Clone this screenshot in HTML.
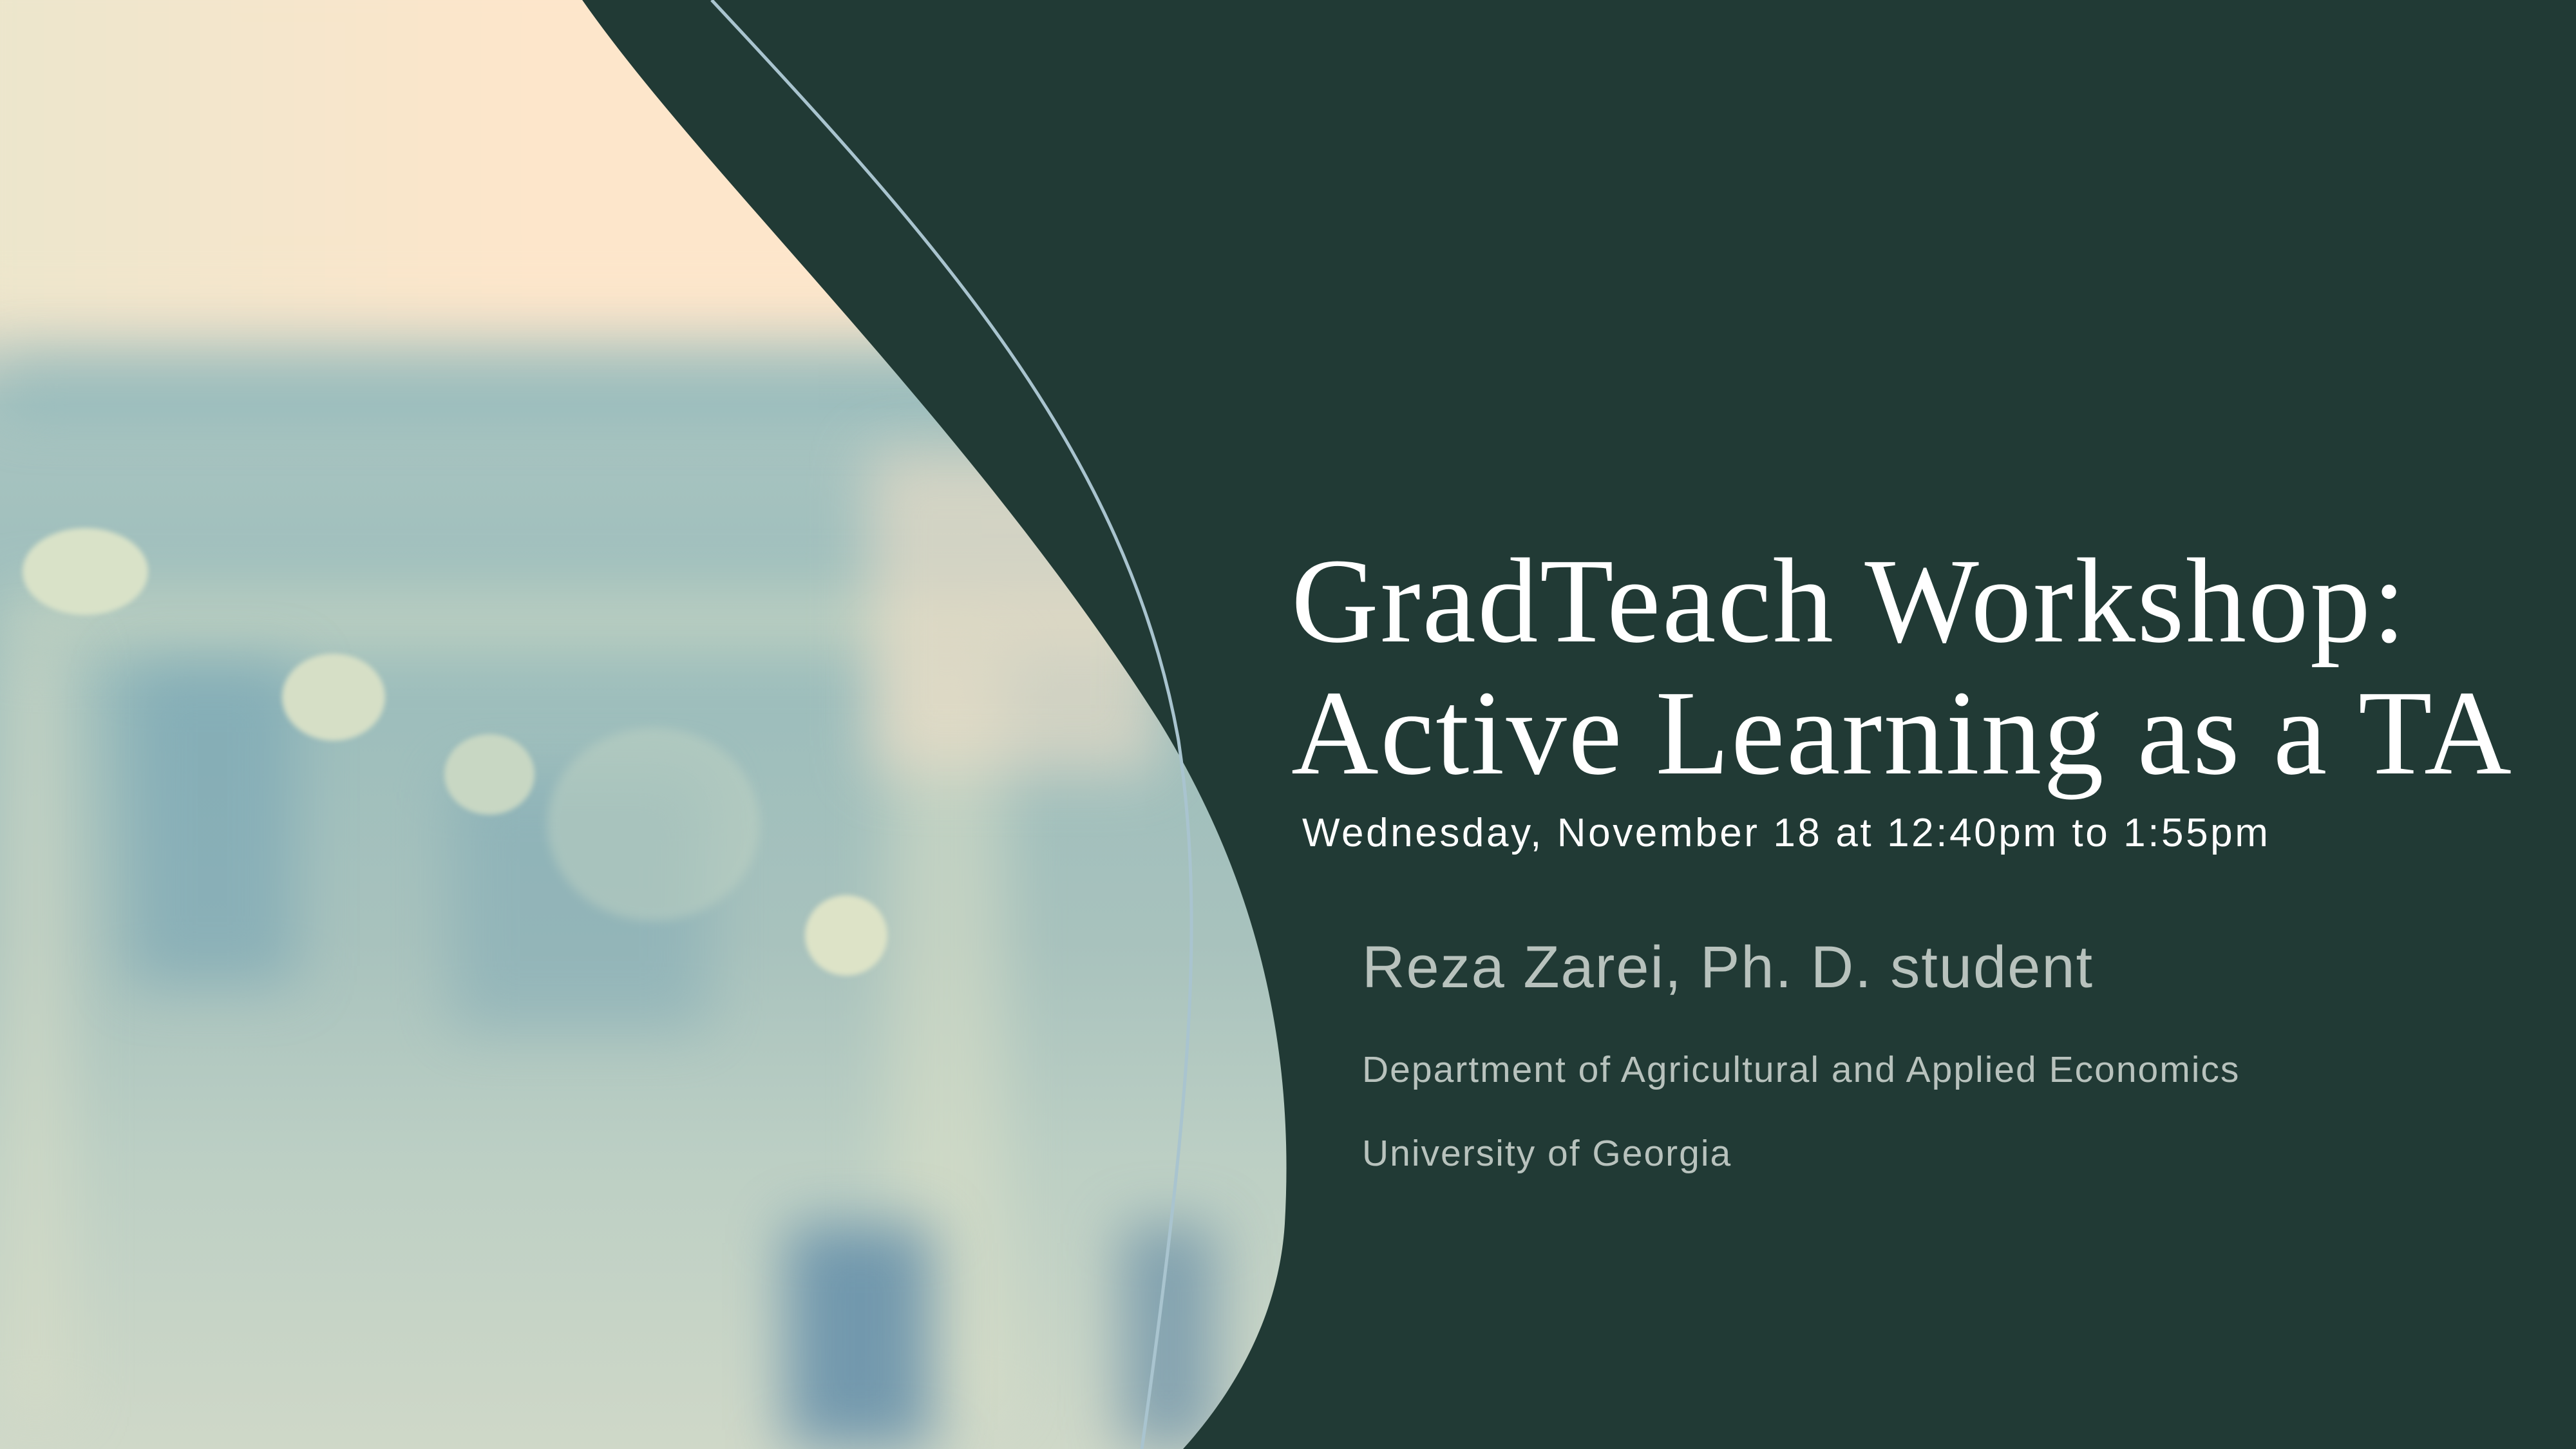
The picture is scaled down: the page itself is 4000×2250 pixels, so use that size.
<!DOCTYPE html>
<html><head><meta charset="utf-8"><style>
html,body{margin:0;padding:0}
body{width:4000px;height:2250px;background:#213a35;position:relative;overflow:hidden;font-family:"Liberation Sans",sans-serif}
#img{position:absolute;left:0;top:0;width:2100px;height:2250px;clip-path:url(#cp);overflow:hidden;
background:linear-gradient(180deg,#f5e7cd 0%,#fde6cb 18%,#a9c4c0 28%,#9bbdbc 45%,#a8c2bd 65%,#bccfc4 80%,#cfd8c8 100%)}
.b{position:absolute;filter:blur(45px)}
.t{position:absolute;white-space:nowrap}
</style></head><body>
<svg width="0" height="0" style="position:absolute"><defs><clipPath id="cp">
<path d="M0 0 L904 0 C1100 280 1500 650 1800 1120 C1960 1380 2010 1640 1995 1900 C1985 2060 1900 2180 1837 2250 L0 2250 Z"/></clipPath></defs></svg>
<div id="img">
 <div class="b" style="left:-100px;top:-100px;width:2300px;height:600px;background:linear-gradient(90deg,#eae6cc,#fde6cb 40%,#fde6cb);filter:blur(50px)"></div>
 <div class="b" style="left:0;top:560px;width:2100px;height:80px;background:#7fb0b8;opacity:.5"></div>
 <div class="b" style="left:0;top:920px;width:2100px;height:90px;background:#d4dcc4;opacity:.6"></div>
 <div class="b" style="left:200px;top:1030px;width:260px;height:500px;background:#6e9fb2;opacity:.5"></div>
 <div class="b" style="left:700px;top:1200px;width:400px;height:400px;background:#7aa6b4;opacity:.45"></div>
 <div class="b" style="left:0;top:1000px;width:110px;height:1200px;background:#d8ddc7;opacity:.6"></div>
 <div class="b" style="left:1380px;top:1000px;width:180px;height:1200px;background:#dfe2c8;opacity:.5"></div>
 <div class="b" style="left:1220px;top:1900px;width:230px;height:350px;background:#4e7fa3;opacity:.7"></div>
 <div class="b" style="left:1740px;top:1900px;width:150px;height:350px;background:#5580a0;opacity:.6"></div>
 <div class="b" style="left:1350px;top:700px;width:450px;height:500px;background:#f3e0c8;opacity:.6"></div>
 <div style="position:absolute;left:35px;top:820px;width:195px;height:135px;border-radius:50%;background:#d9e2c8;filter:blur(4px)"></div>
 <div style="position:absolute;left:438px;top:1015px;width:160px;height:135px;border-radius:50%;background:#d6dfc6;filter:blur(4px)"></div>
 <div style="position:absolute;left:690px;top:1140px;width:140px;height:125px;border-radius:50%;background:#c8d7c3;filter:blur(4px)"></div>
 <div style="position:absolute;left:1250px;top:1390px;width:128px;height:125px;border-radius:50%;background:#dde3c7;filter:blur(4px)"></div>
 <div style="position:absolute;left:850px;top:1130px;width:330px;height:300px;border-radius:50%;background:#c5d6c4;opacity:.45;filter:blur(8px)"></div>
</div>
<svg width="4000" height="2250" style="position:absolute;left:0;top:0">
<path d="M1105 0 C1450 370 1750 700 1830 1150 C1870 1420 1850 1700 1773 2250" fill="none" stroke="#a9c4cf" stroke-width="5"/>
</svg>
<div class="t" style="left:2005px;top:830px;font-family:'Liberation Serif',serif;font-size:188px;letter-spacing:2.5px;color:#fff;line-height:205px">GradTeach Workshop:<br>Active Learning as a TA</div>
<div class="t" style="left:2022px;top:1258px;font-size:62px;letter-spacing:3.6px;color:#fff">Wednesday, November 18 at 12:40pm to 1:55pm</div>
<div class="t" style="left:2115px;top:1450px;font-size:92px;letter-spacing:2px;color:#b8c2bd">Reza Zarei, Ph. D. student</div>
<div class="t" style="left:2115px;top:1628px;font-size:57px;letter-spacing:2px;color:#b8c2bd">Department of Agricultural and Applied Economics</div>
<div class="t" style="left:2115px;top:1758px;font-size:57px;letter-spacing:2px;color:#b8c2bd">University of Georgia</div>
</body></html>
